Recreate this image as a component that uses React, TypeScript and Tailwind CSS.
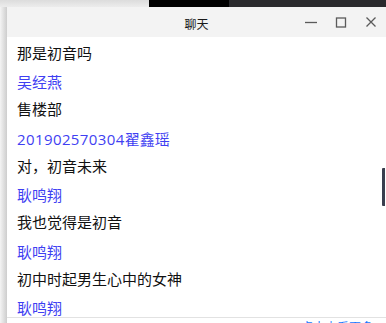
import React from 'react';

type Line = { text: string; name?: boolean };

const lines: Line[] = [
  { text: '那是初音吗' },
  { text: '吴经燕', name: true },
  { text: '售楼部' },
  { text: '201902570304翟鑫瑶', name: true },
  { text: '对，初音未来' },
  { text: '耿鸣翔', name: true },
  { text: '我也觉得是初音' },
  { text: '耿鸣翔', name: true },
  { text: '初中时起男生心中的女神' },
  { text: '耿鸣翔', name: true },
];

const cjk = "font-['Noto_Sans_CJK_SC','Microsoft_YaHei',sans-serif]";

function Message({ line }: { line: Line }) {
  if (line.name) {
    const m = line.text.match(/^(\d+)(.*)$/);
    return (
      <div className="mt-[2.5px] h-[27px] leading-[27px] text-[15px] text-[#3f3ff2]">
        {m ? (
          <>
            <span className="font-['Open_Sans',sans-serif] tracking-[0.4px]">{m[1]}</span>
            {m[2]}
          </>
        ) : (
          line.text
        )}
      </div>
    );
  }
  return <div className="h-[27px] leading-[27px] text-[15px] text-[#111]">{line.text}</div>;
}

export default function App() {
  return (
    <div className={`w-[386px] h-[323px] overflow-hidden flex flex-col bg-white ${cjk}`}>
      {/* desktop strip behind the window */}
      <div className="flex h-[7px] shrink-0">
        <div className="w-[149px] bg-gradient-to-b from-[#dcdcdc] to-[#ececec]" />
        <div className="w-[80px] bg-black" />
        <div className="flex-1 bg-[#2a2a2d]" />
      </div>

      <div className="flex flex-1 min-h-0">
        {/* window shadow */}
        <div className="w-[7px] shrink-0 bg-gradient-to-r from-[#f4f4f4] to-[#cdcdcd]" />

        <div className="flex-1 flex flex-col min-w-0 relative">
          {/* title bar */}
          <div className="h-[30px] shrink-0 grid grid-cols-[1fr_auto_1fr] items-center bg-[#f3f3f3]">
            <div />
            <div className="text-[12px] text-[#1a1a1a] pt-[3px]">聊天</div>
            <div className="flex justify-end h-full">
              <button className="w-[30px] h-full flex items-center justify-center">
                <svg width="14" height="14" viewBox="0 0 14 14">
                  <line x1="1" y1="7.5" x2="13" y2="7.5" stroke="#5a5a5a" strokeWidth="1.3" />
                </svg>
              </button>
              <button className="w-[30px] h-full flex items-center justify-center">
                <svg width="12" height="12" viewBox="0 0 12 12">
                  <rect x="1.5" y="2" width="9" height="9" fill="none" stroke="#5a5a5a" strokeWidth="1.3" />
                </svg>
              </button>
              <button className="w-[30px] h-full flex items-center justify-center pr-[1px]">
                <svg width="12" height="12" viewBox="0 0 12 12">
                  <path d="M1.5 1.5 L10.5 10.5 M10.5 1.5 L1.5 10.5" stroke="#5a5a5a" strokeWidth="1.3" />
                </svg>
              </button>
            </div>
          </div>

          {/* chat messages */}
          <div className="flex-1 min-h-0 overflow-hidden px-[10px] pt-[4px] -mt-[2.5px]">
            {lines.map((l, i) => (
              <Message key={i} line={l} />
            ))}
          </div>

          {/* scrollbar thumb */}
          <div className="absolute right-[1px] top-[161px] w-[3px] h-[38px] rounded-l-[1px] bg-[#3a3e4e]" />

          {/* footer, mostly cut off by the screenshot edge */}
          <div className="h-[6px] shrink-0 border-t border-[#e2e2e2] overflow-hidden flex justify-end pr-[13px]">
            <span className="text-[12px] leading-[16px] text-[#1677ff] pt-[1px]">点击查看更多</span>
          </div>
        </div>
      </div>
    </div>
  );
}
